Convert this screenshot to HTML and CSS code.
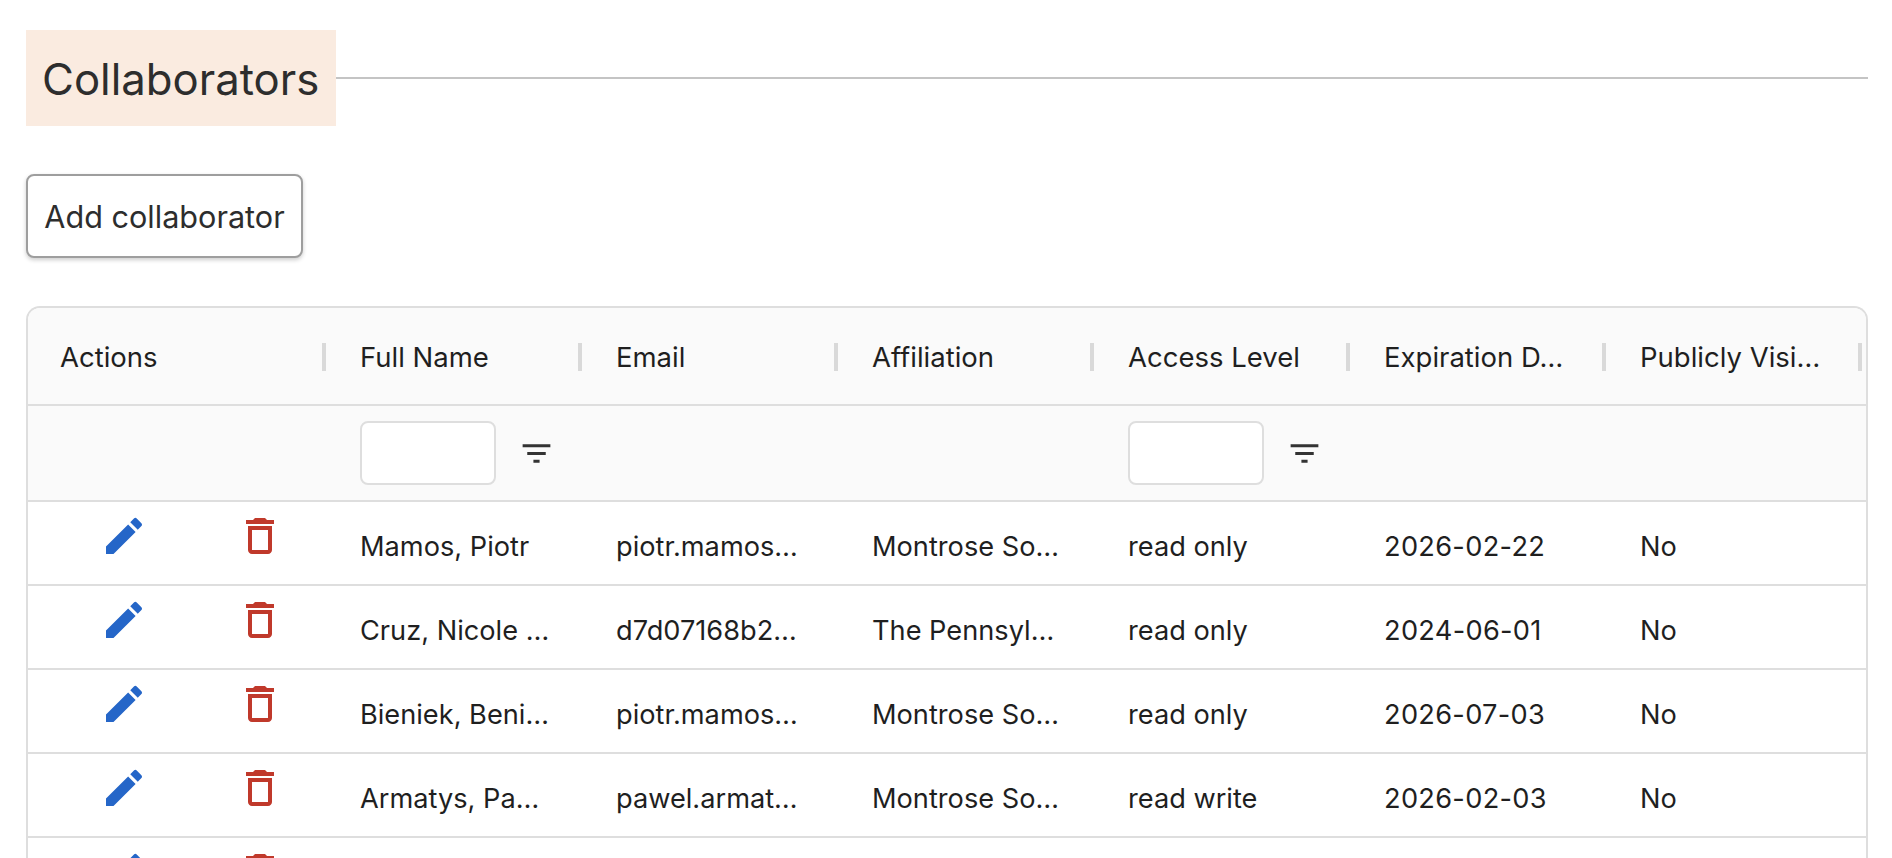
FILE: index.html
```html
<!DOCTYPE html>
<html lang="en">
<head>
    <meta charset="UTF-8">
    <meta name="viewport" content="width=device-width, initial-scale=1.0">
    <title>Collaborators</title>
    <link rel="stylesheet" href="styles.css">
</head>
<body>
    <svg class="icon-defs" aria-hidden="true">
        <symbol id="icon-edit" viewBox="0 0 24 24"><path d="M3 17.25V21h3.75L17.81 9.94l-3.75-3.75L3 17.25zM20.71 7.04c.39-.39.39-1.02 0-1.41l-2.34-2.34a.9959.9959 0 0 0-1.41 0l-1.83 1.83 3.75 3.75 1.83-1.83z"/></symbol>
        <symbol id="icon-delete" viewBox="0 0 24 24"><path d="M6 19c0 1.1.9 2 2 2h8c1.1 0 2-.9 2-2V7H6v12zM8 9h8v10H8V9zm7.5-5l-1-1h-5l-1 1H5v2h14V4h-3.5z"/></symbol>
        <symbol id="icon-filter" viewBox="0 0 24 24"><path d="M10 18h4v-2h-4v2zM3 6v2h18V6H3zm3 7h12v-2H6v2z"/></symbol>
    </svg>

    <div class="section-head">
        <h2 class="section-title">Collaborators</h2>
        <div class="section-rule"></div>
    </div>

    <button class="add-button">Add collaborator</button>

    <div class="table-wrap">
        <table class="grid">
            <colgroup>
                <col class="col-actions">
                <col class="col-data">
                <col class="col-data">
                <col class="col-data">
                <col class="col-data">
                <col class="col-data">
                <col>
            </colgroup>
            <thead>
                <tr class="head-row">
                    <th>Actions</th>
                    <th>Full Name</th>
                    <th>Email</th>
                    <th>Affiliation</th>
                    <th>Access Level</th>
                    <th>Expiration D…</th>
                    <th>Publicly Visi…</th>
                </tr>
                <tr class="filter-row">
                    <td></td>
                    <td><div class="filter"><input class="filter-input" type="text" aria-label="Filter full name"><svg class="icon-filter"><use href="#icon-filter"/></svg></div></td>
                    <td></td>
                    <td></td>
                    <td><div class="filter"><input class="filter-input" type="text" aria-label="Filter access level"><svg class="icon-filter"><use href="#icon-filter"/></svg></div></td>
                    <td></td>
                    <td></td>
                </tr>
            </thead>
            <tbody>
                <tr>
                    <td class="actions"><div class="action-icons"><svg class="icon-edit"><use href="#icon-edit"/></svg><svg class="icon-delete"><use href="#icon-delete"/></svg></div></td>
                    <td>Mamos, Piotr</td>
                    <td>piotr.mamos…</td>
                    <td>Montrose So…</td>
                    <td>read only</td>
                    <td class="date">2026-02-22</td>
                    <td>No</td>
                </tr>
                <tr>
                    <td class="actions"><div class="action-icons"><svg class="icon-edit"><use href="#icon-edit"/></svg><svg class="icon-delete"><use href="#icon-delete"/></svg></div></td>
                    <td>Cruz, Nicole …</td>
                    <td>d7d07168b2…</td>
                    <td>The Pennsyl…</td>
                    <td>read only</td>
                    <td class="date">2024-06-01</td>
                    <td>No</td>
                </tr>
                <tr>
                    <td class="actions"><div class="action-icons"><svg class="icon-edit"><use href="#icon-edit"/></svg><svg class="icon-delete"><use href="#icon-delete"/></svg></div></td>
                    <td>Bieniek, Beni…</td>
                    <td>piotr.mamos…</td>
                    <td>Montrose So…</td>
                    <td>read only</td>
                    <td class="date">2026-07-03</td>
                    <td>No</td>
                </tr>
                <tr>
                    <td class="actions"><div class="action-icons"><svg class="icon-edit"><use href="#icon-edit"/></svg><svg class="icon-delete"><use href="#icon-delete"/></svg></div></td>
                    <td>Armatys, Pa…</td>
                    <td>pawel.armat…</td>
                    <td>Montrose So…</td>
                    <td>read write</td>
                    <td class="date">2026-02-03</td>
                    <td>No</td>
                </tr>
                <tr>
                    <td class="actions"><div class="action-icons"><svg class="icon-edit"><use href="#icon-edit"/></svg><svg class="icon-delete"><use href="#icon-delete"/></svg></div></td>
                    <td></td>
                    <td></td>
                    <td></td>
                    <td></td>
                    <td></td>
                    <td></td>
                </tr>
            </tbody>
        </table>
    </div>
</body>
</html>
```

FILE: styles.css
```css
html, body {
    height: 858px;
    overflow: hidden;
}
body {
    margin: 0;
    padding: 30px 24px 0 26px;
    box-sizing: border-box;
    background-color: white;
    font-family: Inter, "Liberation Sans", sans-serif;
    color: #1f1f1f;
}
.icon-defs {
    display: none;
}

.section-head {
    display: flex;
    align-items: center;
}
.section-title {
    margin: 0;
    width: 310px;
    height: 96px;
    box-sizing: border-box;
    padding-left: 16px;
    background-color: #faebe0;
    color: #2d2d2d;
    font-size: 43.7px;
    font-weight: 400;
    line-height: 100px;
    white-space: nowrap;
}
.section-rule {
    flex: 1;
    height: 2px;
    background-color: #c4c4c4;
}

.add-button {
    display: block;
    width: 277px;
    height: 84px;
    margin-top: 48px;
    padding: 0;
    background-color: white;
    border: 2px solid #9e9e9e;
    border-radius: 8px;
    box-shadow: 0 2px 4px rgba(0, 0, 0, 0.2);
    color: #2d2d2d;
    font-family: inherit;
    font-size: 30.6px;
}

.table-wrap {
    margin-top: 48px;
    border: 2px solid #dedede;
    border-bottom: none;
    border-radius: 14px 14px 0 0;
    overflow: hidden;
}
.grid {
    width: 100%;
    table-layout: fixed;
    border-collapse: collapse;
    font-size: 27.2px;
}
.col-actions {
    width: 300px;
}
.col-data {
    width: 256px;
}
.grid th, .grid td {
    padding: 0 0 0 32px;
    text-align: left;
    font-weight: 400;
    white-space: nowrap;
    overflow: hidden;
}
.grid tr {
    border-bottom: 2px solid #dedede;
}

.head-row {
    height: 97px;
    background-color: #fafafa;
}
.head-row th {
    position: relative;
    padding-top: 2px;
    font-size: 27.5px;
}
.head-row th::after {
    content: "";
    position: absolute;
    top: 35px;
    right: 2px;
    width: 4px;
    height: 28px;
    background-color: #d9d9d9;
}
.head-row th:last-child::after {
    right: 4px;
}

.filter-row {
    height: 96px;
    background-color: #fafafa;
}
.filter {
    display: flex;
    align-items: center;
}
.filter-input {
    width: 136px;
    height: 64px;
    box-sizing: border-box;
    padding: 0;
    background-color: white;
    border: 2px solid #dedede;
    border-radius: 8px;
}
.icon-filter {
    width: 37px;
    height: 37px;
    margin-left: 22px;
    fill: #333333;
}

.grid tbody tr {
    height: 84px;
}
.grid tbody td {
    padding-top: 6px;
}
.grid tbody .date {
    letter-spacing: 0.3px;
}
.grid tbody .actions {
    padding: 0 0 14px 0;
}
.action-icons {
    display: flex;
    padding-left: 72px;
    gap: 88px;
}
.action-icons svg {
    width: 48px;
    height: 48px;
}
.icon-edit {
    fill: #2566c8;
}
.icon-delete {
    fill: #c0392b;
}
```
